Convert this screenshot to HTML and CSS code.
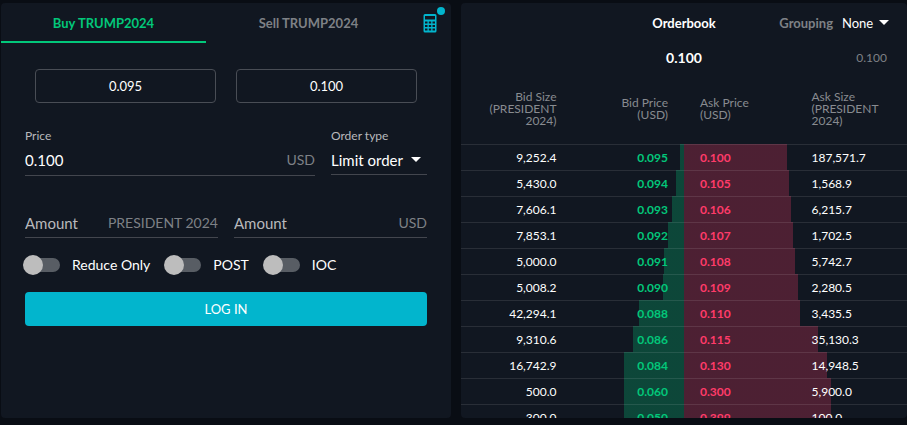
FILE: index.html
```html
<!DOCTYPE html>
<html lang="en">
<head>
<meta charset="utf-8">
<title>TRUMP2024</title>
<link rel="stylesheet" href="styles.css">
</head>
<body>
<main class="layout">
  <section class="panel ticket">
    <div class="tabs">
      <button class="tab tab-active" type="button">Buy TRUMP2024</button>
      <button class="tab" type="button">Sell TRUMP2024</button>
      <button class="calc" type="button" aria-label="Calculator">
        <svg width="14" height="19" viewBox="0 0 14 19" fill="#02b5cd">
          <path fill-rule="evenodd" d="M2 0h10a1.500 1.500 0 0 1 1.500 1.500v15.500a1.500 1.500 0 0 1-1.500 1.500H2A1.500 1.500 0 0 1 .5 17V1.500A1.500 1.500 0 0 1 2 0zM2 2v3.500h10V2zM2 7.500v2h2.500v-2zm3.800 0v2h2.400v-2zm3.700 0v2H12v-2zM2 11v2h2.500v-2zm3.800 0v2h2.400v-2zm3.700 0v2H12v-2zM2 14.500v2h2.500v-2zm3.800 0v2h2.400v-2zm3.700 0v2H12v-2z"/>
        </svg>
        <span class="badge"></span>
      </button>
    </div>
    <form class="form">
      <div class="quotes">
        <button class="quote" type="button">0.095</button>
        <button class="quote" type="button">0.100</button>
      </div>
      <div class="fields">
        <div class="field field-grow">
          <label class="label" for="price">Price</label>
          <div class="control">
            <input class="input" id="price" type="text" value="0.100">
            <span class="unit">USD</span>
          </div>
        </div>
        <div class="field field-type">
          <label class="label" for="type">Order type</label>
          <div class="control control-select">
            <select class="select" id="type"><option>Limit order</option></select>
            <svg class="caret" width="10" height="5" viewBox="0 0 10 5" fill="#fff"><path d="M0 0l5 5 5-5z"/></svg>
          </div>
        </div>
      </div>
      <div class="fields amounts">
        <div class="control field-grow">
          <input class="input" type="text" placeholder="Amount" aria-label="Amount in PRESIDENT 2024">
          <span class="unit">PRESIDENT 2024</span>
        </div>
        <div class="control field-grow">
          <input class="input" type="text" placeholder="Amount" aria-label="Amount in USD">
          <span class="unit">USD</span>
        </div>
      </div>
      <div class="toggles">
        <label class="toggle"><input class="switch" type="checkbox">Reduce Only</label>
        <label class="toggle"><input class="switch" type="checkbox">POST</label>
        <label class="toggle"><input class="switch" type="checkbox">IOC</label>
      </div>
      <button class="login" type="button">LOG IN</button>
    </form>
  </section>

  <section class="panel book">
    <header class="book-head">
      <h2 class="title">Orderbook</h2>
      <div class="grouping">
        <label class="grouping-label" for="grouping">Grouping</label>
        <div class="grouping-control">
          <select class="select" id="grouping"><option>None</option></select>
          <svg class="caret" width="10" height="5" viewBox="0 0 10 5" fill="#fff"><path d="M0 0l5 5 5-5z"/></svg>
        </div>
      </div>
    </header>
    <div class="book-head last">
      <strong class="last-price">0.100</strong>
      <span class="mark-price">0.100</span>
    </div>
    <table class="orders">
      <thead>
        <tr><th>Bid Size (PRESIDENT 2024)</th><th>Bid Price (USD)</th><th>Ask Price (USD)</th><th>Ask Size (PRESIDENT 2024)</th></tr>
      </thead>
      <tbody>
        <tr style="--bid:.9%;--ask:23.1%"><td>9,252.4</td><td>0.095</td><td>0.100</td><td>187,571.7</td></tr>
        <tr style="--bid:2%;--ask:23.5%"><td>5,430.0</td><td>0.094</td><td>0.105</td><td>1,568.9</td></tr>
        <tr style="--bid:2.900%;--ask:24%"><td>7,606.1</td><td>0.093</td><td>0.106</td><td>6,215.7</td></tr>
        <tr style="--bid:3.600%;--ask:24.4%"><td>7,853.1</td><td>0.092</td><td>0.107</td><td>1,702.5</td></tr>
        <tr style="--bid:4.500%;--ask:24.9%"><td>5,000.0</td><td>0.091</td><td>0.108</td><td>5,742.7</td></tr>
        <tr style="--bid:4.900%;--ask:25.5%"><td>5,008.2</td><td>0.090</td><td>0.109</td><td>2,280.5</td></tr>
        <tr style="--bid:10.1%;--ask:26%"><td>42,294.1</td><td>0.088</td><td>0.110</td><td>3,435.5</td></tr>
        <tr style="--bid:11.5%;--ask:30%"><td>9,310.6</td><td>0.086</td><td>0.115</td><td>35,130.3</td></tr>
        <tr style="--bid:13.5%;--ask:32%"><td>16,742.9</td><td>0.084</td><td>0.130</td><td>14,948.5</td></tr>
        <tr style="--bid:13.5%;--ask:32.9%"><td>500.0</td><td>0.060</td><td>0.300</td><td>5,900.0</td></tr>
        <tr style="--bid:13.5%;--ask:32.9%"><td>300.0</td><td>0.050</td><td>0.399</td><td>100.0</td></tr>
      </tbody>
    </table>
  </section>
</main>
</body>
</html>
```
FILE: styles.css
```css
* { box-sizing: border-box; }

body {
  margin: 0;
  background: #090d14;
  color: #fff;
  font: 14px/20px Lato, sans-serif;
}

button, input, select {
  margin: 0;
  padding: 0;
  border: 0;
  background: none;
  color: inherit;
  font: inherit;
}

.layout {
  display: grid;
  grid-template-columns: 450fr 446fr;
  grid-template-rows: minmax(0, 1fr);
  gap: 10px;
  height: 100vh;
  padding: 3px 0 7px 1px;
}

.panel {
  min-width: 0;
  overflow: hidden;
  border-radius: 4px;
  background: #111721;
}

/* Order ticket */
.tabs {
  display: flex;
  height: 40px;
}

.tab {
  flex: 1;
  padding-top: 2px;
  border-bottom: 2px solid transparent;
  color: #7e8186;
  font-size: 13px;
  font-weight: 700;
}

.tab-active {
  border-color: #02c77a;
  color: #02c77a;
}

.calc {
  display: flex;
  justify-content: center;
  align-items: center;
  position: relative;
  width: 40px;
  padding-right: 2px;
}

.badge {
  position: absolute;
  top: 4px;
  right: 6px;
  width: 8px;
  height: 8px;
  border-radius: 50%;
  background: #02b5cd;
}

.form { padding: 26px 24px 0; }

.quotes {
  display: flex;
  gap: 20px;
  padding: 0 10px;
}

.quote {
  flex: 1;
  height: 34px;
  border: 1px solid #494d55;
  border-radius: 4px;
  font-size: 13px;
}

.fields {
  display: flex;
  gap: 16px;
  margin-top: 24px;
}

.field-grow {
  flex: 1;
  min-width: 0;
}

.field-type { width: 96px; }

.label {
  display: block;
  color: #b8b9bc;
  font-size: 12px;
  line-height: 18px;
}

.control {
  display: flex;
  align-items: center;
  height: 31px;
  border-bottom: 1px solid #43464e;
  font-size: 15px;
}

.input {
  flex: 1;
  width: 0;
  outline: 0;
}

.input::placeholder {
  color: #b8b9bc;
  opacity: 1;
}

.unit {
  color: #7e8186;
  font-size: 14px;
}

.control-select,
.grouping-control {
  position: relative;
}

.control-select { height: 30px; }

.select {
  width: 100%;
  appearance: none;
}

.caret {
  position: absolute;
  top: 50%;
  right: 6px;
  margin-top: -3px;
  pointer-events: none;
}

.amounts { margin-top: 31px; }

.amounts .control { padding-top: 2px; }

.toggles {
  display: flex;
  gap: 14px;
  margin: 17px 0 17px -2px;
}

.toggle {
  display: flex;
  align-items: center;
  gap: 11px;
}

.switch {
  display: grid;
  align-items: center;
  width: 38px;
  height: 20px;
  appearance: none;
}

.switch::before,
.switch::after {
  grid-area: 1 / 1;
  content: "";
}

.switch::before {
  width: 34px;
  height: 14px;
  margin-left: 3px;
  border-radius: 7px;
  background: #585d64;
}

.switch::after {
  width: 20px;
  height: 20px;
  border-radius: 50%;
  background: #bdbdbd;
}

.login {
  display: block;
  width: 100%;
  height: 34px;
  border-radius: 4px;
  background: #02b5cd;
  font-size: 13px;
}

/* Orderbook */
.book-head {
  display: grid;
  grid-template-columns: 1fr auto 1fr;
  align-items: center;
  height: 40px;
}

.title {
  grid-column: 2;
  margin: 0;
  font-size: 13px;
}

.grouping {
  display: flex;
  justify-content: flex-end;
  gap: 9px;
  padding-right: 12px;
  font-size: 13px;
}

.grouping-label {
  color: #7e8186;
  font-weight: 700;
}

.grouping-control { width: 53px; }

.last { height: 30px; }

.last-price {
  grid-column: 2;
  font-size: 14px;
}

.mark-price {
  padding-right: 20px;
  color: #7e8186;
  font-size: 12px;
  text-align: right;
}

.orders {
  width: 100%;
  border-collapse: collapse;
  table-layout: fixed;
  font-size: 12px;
}

.orders th,
.orders td {
  padding: 0 16px;
  text-align: left;
}

.orders th {
  height: 71px;
  color: #888b90;
  font-weight: 400;
  line-height: 12px;
}

.orders td {
  height: 26px;
  padding-top: 2px;
  box-shadow: inset 0 1px rgba(255, 255, 255, .1);
}

.orders th:nth-child(-n+2),
.orders td:nth-child(-n+2) {
  text-align: right;
}

.orders tbody tr {
  background: linear-gradient(to right,
    transparent calc(50% - var(--bid)),
    rgba(2, 199, 122, .27) 0 50%,
    rgba(255, 59, 105, .25) 0 calc(50% + var(--ask)),
    transparent 0);
}

.orders td:nth-child(2),
.orders td:nth-child(3) {
  color: #02c77a;
  font-weight: 700;
}

.orders td:nth-child(3) { color: #ff3b69; }
```
